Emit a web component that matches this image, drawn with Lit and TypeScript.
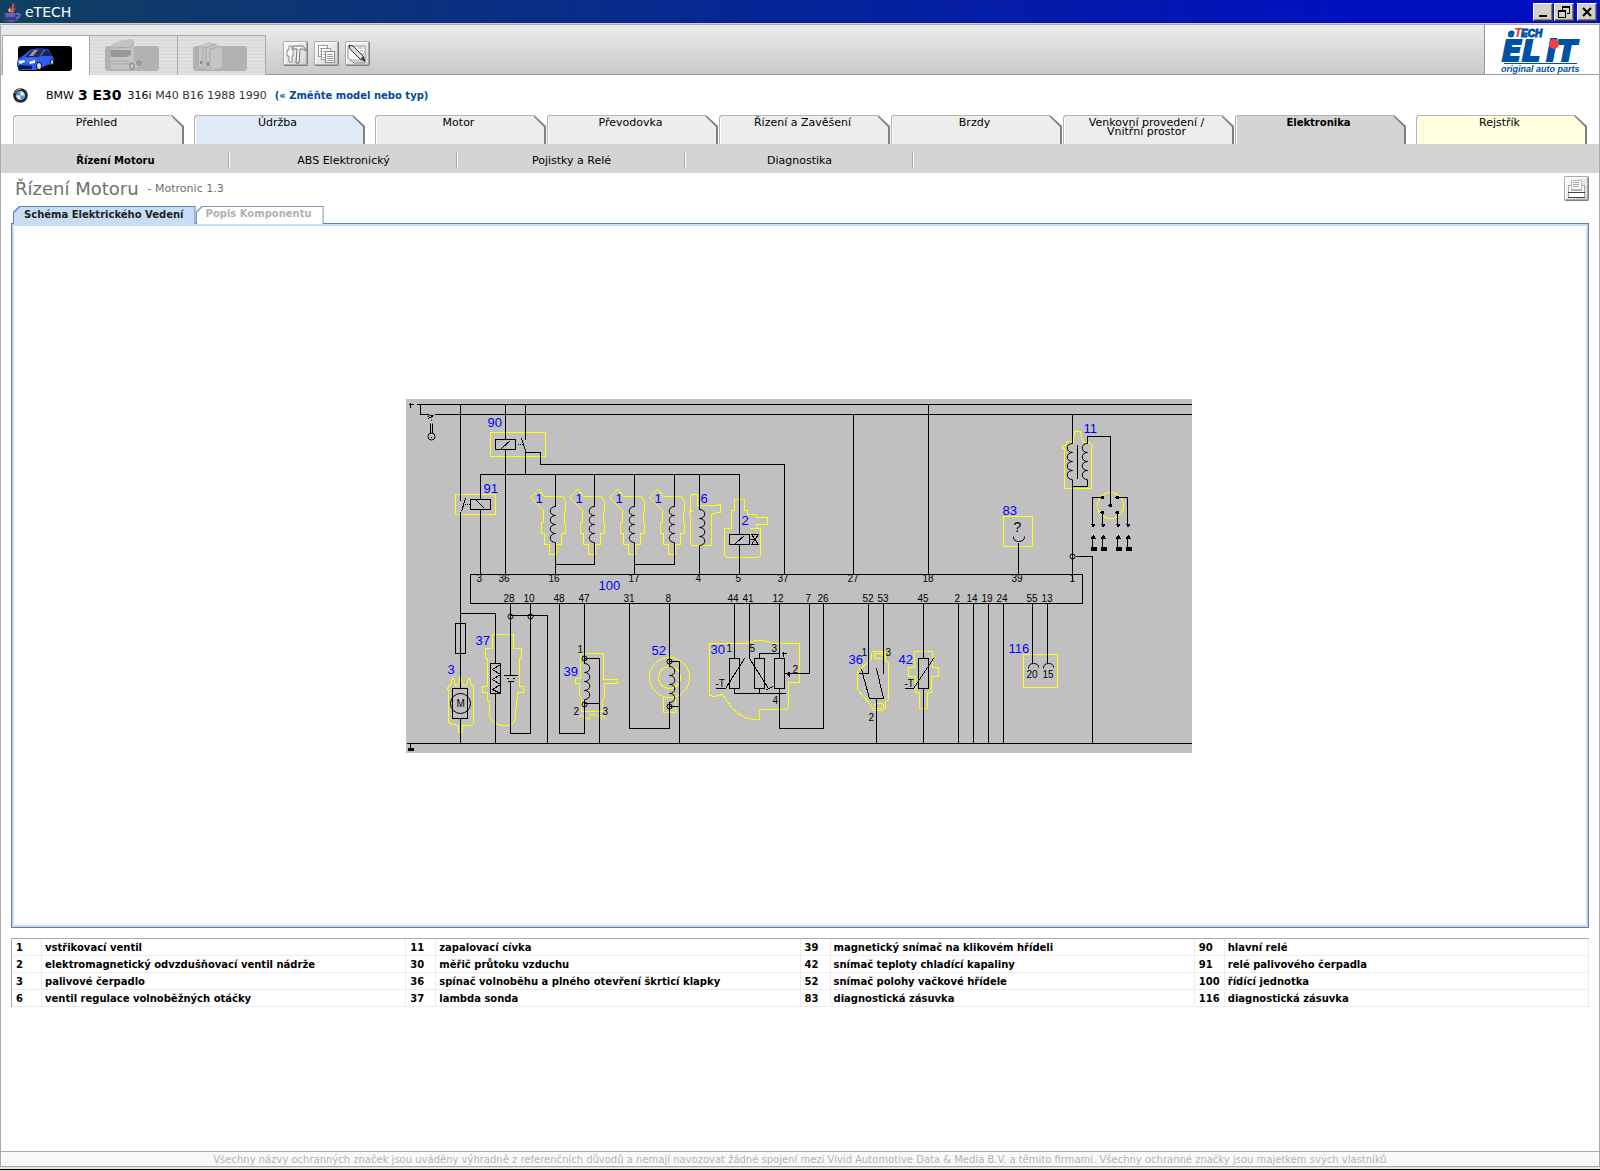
import { LitElement, html, svg, css } from "lit";
import { customElement, state } from "lit/decorators.js";
import { classMap } from "lit/directives/class-map.js";

const JAVA_ICON = svg`<svg width="20" height="20" viewBox="0 0 20 20" aria-hidden="true">
  <path d="M10 11C4 8 12 6 10 1c4 2 2 4 0 6 3-1 4-2 5-2-4 3-2 4-4 6z" fill="#e0543c"/>
  <path d="M7 10C5 8 7 7 8 5c0 2 0 3 1 5z" fill="#f0a090"/>
  <path d="M2 11h12v4c0 2-3 3-6 3s-5-1-6-3z" fill="#3c3c8c"/>
  <path d="M3 12h10M4 14h9" stroke="#8c8cd0" fill="none"/>
  <path d="M14 12c5-1 5 3 0 4" fill="none" stroke="#6a6ab8" stroke-width="2"/>
  <path d="M1 18c4 3 12 3 17-1-4 1-12 2-17 1z" fill="#5858a8"/>
</svg>`;

const CAR_ICON = svg`<svg width="56" height="26" viewBox="0 0 56 26" aria-hidden="true">
  <rect x="2" y="1" width="54" height="25" rx="3" fill="#000"/>
  <path d="M1 17l1-3 6-4 6-5c4-2 15-2 19 0l5 9v5l-7 1-6 3-4 2H5l-4-3z" fill="#2c5cf0"/>
  <path d="M9 12l7-7c3-1 9-1 12-1l-5 8z" fill="#2a2c48"/>
  <path d="M25 11l5-6 3 1 3 5z" fill="#1c2450"/>
  <path d="M13 11l5-6h4l-5 6z" fill="#9098b0"/>
  <path d="M9 13l13 0-4 4-12 1z" fill="#4470ff"/>
  <path d="M2 16l6-1 1 2-5 2zM13 17l6-2v3l-5 1z" fill="#f0f4ff"/>
  <path d="M3 20l13 1v3H5l-3-1z" fill="#10183c"/>
  <ellipse cx="23" cy="21" rx="3" ry="4" fill="#222"/><ellipse cx="23" cy="21" rx="2" ry="3" fill="#d8d8d8"/>
  <ellipse cx="36" cy="17" rx="2" ry="3" fill="#222"/><ellipse cx="36" cy="17" rx="1" ry="2" fill="#d8d8d8"/>
</svg>`;

const TRUCK_ICON = svg`<svg width="54" height="32" viewBox="0 0 54 32" aria-hidden="true">
  <rect x="0" y="7" width="54" height="25" rx="3" fill="#b2b2b2"/>
  <path d="M5 8c2-4 8-7 23-8l1 3v20l8-3v6l-9 4H6z" fill="#c4c4c4"/>
  <path d="M6 9l20-1 2-5" fill="none" stroke="#aaa"/>
  <path d="M5 11h21v5l-5 2H6z" fill="#989898"/>
  <path d="M6 22h18M6 25h18" stroke="#a8a8a8"/>
  <ellipse cx="27" cy="27" rx="3" ry="4" fill="#999"/><ellipse cx="27" cy="27" rx="1" ry="2" fill="#d8d8d8"/>
  <ellipse cx="34" cy="24" rx="3" ry="3" fill="#999"/>
</svg>`;

const BOOKS_ICON = svg`<svg width="54" height="30" viewBox="0 0 54 30" aria-hidden="true">
  <rect x="0" y="5" width="54" height="25" rx="3" fill="#b2b2b2"/>
  <path d="M6 5l9-4 6 1 8 4v20l-9 3-7-1-7-3z" fill="#c6c6c6"/>
  <path d="M6 5l7 2v21M13 7l10-4M17 8v20M17 8l12-3M10 6v20" fill="none" stroke="#a8a8a8"/>
  <path d="M8 20v3M15 21v4" stroke="#8c8c8c" stroke-width="2"/>
</svg>`;

const TOOLS_ICON = svg`<svg width="23" height="23" viewBox="0 0 23 23" aria-hidden="true">
  <path d="M9 4h8c3 0 4 2 5 5l-3-2h-3l-1 14h-3l1-14H9z" fill="#f4f4f4" stroke="#707070"/>
  <path d="M5 4h3v4h1v6H8v6H5v-6H3V8h2z" fill="#fff" stroke="#888"/>
</svg>`;

const PAGES_ICON = svg`<svg width="23" height="23" viewBox="0 0 23 23" shape-rendering="crispEdges" aria-hidden="true">
  <path d="M3.500 3.500h9v11h-9z" fill="#fff" stroke="#999"/>
  <path d="M5 6.500h6M5 9.500h6M5 12.500h6" stroke="#aaa"/>
  <path d="M6.500 6.500h9v11h-9z" fill="#fff" stroke="#999"/>
  <path d="M8 9.500h6M8 12.500h6M8 15.500h6" stroke="#aaa"/>
  <path d="M10.500 9.500h9v11h-9z" fill="#fff" stroke="#888"/>
  <path d="M12 12.500h6M12 14.500h6M12 16.500h6M12 18.500h6" stroke="#999"/>
</svg>`;

const NOTE_ICON = svg`<svg width="23" height="23" viewBox="0 0 23 23" aria-hidden="true">
  <path d="M2 4h17v17H8L2 16z" fill="#fff" stroke="#909090"/>
  <path d="M12 6h5M14 9h3M15 12h3M4 18h12M8 20h11M16 15h2" stroke="#999"/>
  <path d="M3 3l4 1 10 10 2 5-5-2L4 7z" fill="#dcdcdc" stroke="#333"/>
  <path d="M15 16l4 4-2-5z" fill="#222"/>
</svg>`;

const PRINT_ICON = svg`<svg width="23" height="23" viewBox="0 0 23 23" shape-rendering="crispEdges" aria-hidden="true">
  <path d="M3.500 8.500h3v5h10v-5h3v12h-16z" fill="#fff" stroke="#aaa"/>
  <path d="M6.500 3.500h10v9h-10z" fill="#f8f8f8" stroke="#bbb"/>
  <path d="M8 5.500h6M8 7.500h6M8 9.500h6" stroke="#aaa"/>
  <path d="M3 15.500h17M3 20.500h17" stroke="#444"/>
</svg>`;

const BMW_ICON = svg`<svg width="15" height="15" viewBox="0 0 15 15" role="img" aria-label="BMW">
  <circle cx="7.500" cy="7.500" r="7.300" fill="#26292e"/>
  <circle cx="7.500" cy="7.500" r="4.400" fill="#e8ecf0"/>
  <path d="M7.500 7.500V3.100A4.400 4.400 0 0 0 3.100 7.500zM7.500 7.500v4.400a4.400 4.400 0 0 0 4.400-4.400z" fill="#4a9ad4"/>
  <path d="M2 5Q4 1 8 1" stroke="#a0a4a8" fill="none"/>
</svg>`;

const ELIT_LOGO = svg`<svg width="84" height="49" viewBox="0 0 84 49" role="img" aria-label="eTECH ELiT original auto parts">
  <g font-weight="bold" font-style="italic" fill="#0050a4" font-family="Liberation Sans, Arial, sans-serif">
    <text x="8" y="12" font-size="11" stroke="#0050a4">e</text>
    <text x="14" y="12" font-size="13" fill="#e8383c">T</text>
    <text x="21" y="12" font-size="10" stroke="#0050a4">ECH</text>
    <g font-size="29" stroke="#0050a4" stroke-width="2" font-family="DejaVu Sans, Verdana, sans-serif">
      <text x="2" y="36">E</text>
      <text x="22" y="36">L</text>
      <text x="46" y="36">i</text>
      <text x="57" y="36">T</text>
    </g>
    <circle cx="54" cy="19" r="5" fill="#f04040"/>
    <path d="M4 38h73v1H4z"/>
    <text x="1" y="47" font-size="9">original auto parts</text>
  </g>
</svg>`;

type Point = [number, number];

/* Wires: polylines in diagram units. */
const WIRES = `
M408 404h5M410 402v5
M416 404H1191M420 404V414H428M434 414H1191M428 418l5-3
M460 404V500M465 498L461 511M460 511V688M460 718V743
M505 404V439M505 449V574M495 439h20v10h-20zM501 448l9-8
M525 404V439M521 438L525 450V474M525 452H540V464H784V574
M480 499V474H739V534M480 509V574M470 499h20v10h-20zM476 500l8 8
M555 474V506M555 542V574M594 474V506M594 542V564H555
M634 474V506M634 542V574M674 474V506M674 542V564H634
M699 474V509M699 545V574
M739 544V574M729 534h20v10h-20zM735 543l9-8M751 534h7l-7 10h7zM749 539h5
M853 414V574M928 404V574
M1018 542V574
M1072 414V443M1072 479V581M1077 444V478M1087 479V486H1072M1087 443V436H1110V505
M1102 497H1092V526M1117 497H1127V526M1102 512V526M1117 512V526
M1092 537V547M1102 537V547M1117 537V547M1127 537V547
M1075 556H1092V743
M470 574H1082V603H470z
M406 743H1191M410 743V748
M460 613H495V663M495 693V743M455 623h10v30h-10zM490 663h10v30h-10z
M500 664l-8 5 8 5-8 5 8 5-8 5 8 4
M452 688h15v30h-15z
M510 603V675M503 675h14M507 681h6M506 678h2M512 678h2M510 681V733H530V603M510 615H547V743
M559 603V733H584V699M584 603V663M584 658H599V743M584 703H599
M629 603V728H669V701M669 603V666M669 661H679V743M669 706H679
M734 603V658M729 658h10v30h-10zM734 688V693H785M759 688V693M754 658h10v30h-10zM759 658V653H779
M749 603V658L768 688M766 689l7-3
M779 603V658M774 658h10v30h-10zM779 688V728H823V603M809 603V673H784M781 653h5M783 651v5
M715 688h10l19-30
M868 603V673H858M883 603V673M861 669l8 29h14l-7-30M876 698V743
M923 603V658M918 658h10v30h-10zM923 688V743M904 688h9l20-30
M958 603V743M973 603V743M988 603V743M1003 603V743
M1032 603V663M1047 603V663
`;

/* Curved strokes: sockets, connection loops, key switch. */
const CURVES = `
M1013 536q0 5 5 5q6 0 6-5
M1028 668q0-5 5-5q5 0 5 4
M1043 668q0-5 5-5q5 0 5 4
M427 416q3-2 6-1
M430 423v10M432 423v10M431 416v1M431 419v1
`;

const OUTLINES = `
M490 432h55v24h-55zM455 494h40v20h-40z
M690 495l2-1h5v11h21v-1h2v8l-8 1-1 2v30h-20l-1-1v-29l-1-4h3l-2-1z
M734 499h10v11h3v4h9v3h11v7h-11v4h-7h11v27l-3 2h-31l-2-2v-27h7v-18h3z
M1003 516h29v30h-29z
M1062 446l4-2v-3h4l3 2 1-12h6l2 10 4 2 1-2 3 2 2 2v3h-1v40h-27v-40h-2z
M447 689l1-4h2l2-7h1l2 7h2l2-5 1-8 1 8 2 5h3l2-7h1l2 7h2v38l-3 2h-8v7h-4v-7l-6-1-4-2v-33z
M492 634h21v14h8v10h-2v28h4v6h-6v8h-1l-1 18-2 4-5 3h-5l-6-1-6-4-2-5v-15h-2v-8h-5v-6h5v-28h-2v-10h7z
M580 653h23v26h14v4h-13v14l-2 2v12h-21v-14l-2-2v-12h-4v-5h5z
M578 718l2-3 3 1 2 2h4l1-4h5l2 2 3 1 3-2 2 3
M663 696v16h12v-16
M709 643h37l4-2 7-1h6l7 2 3 1h26v39h-11v24l-2 3h-27v10h-7l-10-3-10-8-7-10-3-4-8 2-5-1z
M871 653l2-2h11l1 2v8l3 1v37l-3 2v7l-2 2h-10l-2-3-1-3-13-15v-18l11-10 3-2z
M875 653h7l1 2v2l-1 1h-7l-1-1v-2zM875 703h7l1 2v2l-1 1h-7l-1-1v-2z
M914 651h18v16h6v9h-7v16h-4v16h-8v-16h-4v-16h-7v-9h6z
M1023 654h34v33h-34z
`;

const INJECTOR = "530,497 538,489 544,496 562,496 565,501 565,511 564,511 564,522 565,522 565,533 561,533 561,544 556,544 556,554 549,554 549,544 544,544 544,533 541,533 541,522 543,522 543,510";
const INJECTOR_SHIFTS = [0, 39, 79, 119];

/* Coils: x, y and bulge direction (-1 left, 1 right). */
const COILS: [number, number, number][] = [
  [555, 506, -1], [594, 506, -1], [634, 506, -1], [674, 506, -1], [699, 509, 1],
  [1072, 443, -1], [1087, 443, -1], [584, 663, 1], [669, 666, 1],
];

const LOOPS: Point[] = [[1072, 556], [510, 616], [530, 616], [584, 658], [584, 704], [669, 661], [669, 706]];
const CONTACTS: Point[] = [[1102, 497], [1117, 497], [1102, 512], [1117, 512], [1110, 505]];
const LEADS = [1092, 1102, 1117, 1127];

const COMPONENT_LABELS: [string, number, number][] = [
  ["90", 487, 426], ["91", 483, 492], ["1", 535, 502], ["1", 575, 502], ["1", 615, 502], ["1", 654, 502],
  ["6", 700, 502], ["2", 741, 524], ["11", 1083, 432], ["83", 1002, 514], ["100", 598, 589],
  ["37", 475, 644], ["3", 447, 673], ["39", 563, 675], ["52", 651, 654], ["30", 710, 653],
  ["36", 848, 663], ["42", 898, 663], ["116", 1008, 652],
];

const PIN_LABELS: [string, number, number][] = [
  ["3", 476, 581], ["36", 498, 581], ["16", 548, 581], ["17", 628, 581], ["4", 695, 581], ["5", 735, 581],
  ["37", 777, 581], ["27", 847, 581], ["18", 922, 581], ["39", 1011, 581], ["1", 1069, 581],
  ["28", 503, 601], ["10", 523, 601], ["48", 553, 601], ["47", 578, 601], ["31", 623, 601], ["8", 665, 601],
  ["44", 727, 601], ["41", 742, 601], ["12", 772, 601], ["7", 805, 601], ["26", 817, 601], ["52", 862, 601],
  ["53", 877, 601], ["45", 917, 601], ["2", 954, 601], ["14", 966, 601], ["19", 981, 601], ["24", 996, 601],
  ["55", 1026, 601], ["13", 1041, 601],
  ["1", 577, 652], ["2", 573, 714], ["3", 602, 714], ["1", 726, 651], ["5", 749, 651], ["3", 771, 651],
  ["2", 792, 672], ["4", 772, 703], ["-T", 715, 686], ["1", 861, 655], ["3", 885, 655], ["2", 868, 720],
  ["-T", 904, 686], ["20", 1026, 677], ["15", 1042, 677], ["M", 456, 706],
];

@customElement("wiring-diagram")
class WiringDiagram extends LitElement {
  static styles = css`
    :host { display: block; }
    .diagram { display: block; max-width: 100%; background: #c0c0c0; }
    .line { fill: none; stroke: #000; shape-rendering: crispEdges; }
    .curve { fill: none; stroke: #000; }
    .outline { fill: none; stroke: #ff0; shape-rendering: crispEdges; }
    .solid { fill: #000; shape-rendering: crispEdges; }
    .label { font-family: "Liberation Sans", Arial, sans-serif; font-size: 13px; fill: #00f; }
    .pin { font-family: "Liberation Sans", Arial, sans-serif; font-size: 10px; fill: #000; }
    .query { font-size: 14px; }
  `;

  render() {
    return html`<svg class="diagram" width="786" height="354" viewBox="405.5 398.5 786 354"
      role="img" aria-label="Schéma Elektrického Vedení">
      <path class="outline" d=${OUTLINES}></path>
      ${INJECTOR_SHIFTS.map((dx) => svg`<polygon class="outline" points=${INJECTOR} transform="translate(${dx} 0)"/>`)}
      <circle class="outline" cx="1110" cy="505" r="13"></circle>
      <circle class="outline" cx="669" cy="677" r="20"></circle>
      <circle class="outline" cx="669" cy="677" r="11"></circle>
      <path class="line" d=${WIRES}></path>
      <path class="line" d="M517 444h6M464 504h6" stroke-dasharray="1 1"></path>
      <path class="curve" d=${CURVES}></path>
      ${COILS.map(([x, y, s]) => {
        const turn = `c${7 * s} 0 ${7 * s} 9 0 9`;
        return svg`<path class="curve" d="M${x} ${y}${turn}${turn}${turn}${turn}"/>`;
      })}
      ${LOOPS.map(([x, y]) => svg`<circle class="curve" cx=${x} cy=${y} r="2.5"/>`)}
      <circle class="curve" cx="431" cy="436" r="3.5"></circle>
      <circle class="solid" cx="431" cy="437" r="1"></circle>
      <circle class="curve" cx="460" cy="703" r="10"></circle>
      ${CONTACTS.map(([x, y]) => svg`<circle class="solid" cx=${x} cy=${y} r="2"/>`)}
      ${LEADS.map((x) => svg`<path class="solid" d="M${x - 2} 523h5l-2 4zM${x - 2} 538h5l-2-4zM${x - 2} 546h6v4h-6z"/>`)}
      <path class="solid" d="M785 673l4-2v5zM407.500 747.500h6v3h-6z"></path>
      ${PIN_LABELS.map(([t, x, y]) => svg`<text class="pin" x=${x} y=${y}>${t}</text>`)}
      <text class="pin query" x="1013" y="531">?</text>
      <text class="pin" x="780" y="696">−</text>
      ${COMPONENT_LABELS.map(([t, x, y]) => svg`<text class="label" x=${x} y=${y}>${t}</text>`)}
    </svg>`;
  }
}

const SECTIONS = [
  { name: "Přehled", tone: "plain", end: true },
  { name: "Údržba", tone: "blue", end: true },
  { name: "Motor", tone: "plain", end: false },
  { name: "Převodovka", tone: "plain", end: false },
  { name: "Řízení a Zavěšení", tone: "plain", end: false },
  { name: "Brzdy", tone: "plain", end: false },
  { name: "Venkovní provedení / Vnitřní prostor", tone: "plain", end: false },
  { name: "Elektronika", tone: "plain", end: true },
  { name: "Rejstřík", tone: "yellow", end: false },
];

const SUBSECTIONS = ["Řízení Motoru", "ABS Elektronický", "Pojistky a Relé", "Diagnostika"];

const LEGEND = [
  ["1", "vstřikovací ventil", "11", "zapalovací cívka", "39", "magnetický snímač na klikovém hřídeli", "90", "hlavní relé"],
  ["2", "elektromagnetický odvzdušňovací ventil nádrže", "30", "měřič průtoku vzduchu", "42", "snímač teploty chladící kapaliny", "91", "relé palivového čerpadla"],
  ["3", "palivové čerpadlo", "36", "spínač volnoběhu a plného otevření škrticí klapky", "52", "snímač polohy vačkové hřídele", "100", "řídící jednotka"],
  ["6", "ventil regulace volnoběžných otáčky", "37", "lambda sonda", "83", "diagnostická zásuvka", "116", "diagnostická zásuvka"],
];

@customElement("app-root")
class AppRoot extends LitElement {
  @state() private vehicle = 0;
  @state() private section = "Elektronika";
  @state() private subsection = "Řízení Motoru";

  static styles = css`
    :host {
      display: flex; flex-direction: column; min-height: 100vh; background: #fff; color: #000;
      font-family: "DejaVu Sans", Verdana, sans-serif; font-size: 11px;
    }
    * { box-sizing: border-box; }
    button { font: inherit; color: inherit; border: 0; padding: 0; margin: 0; background: none; cursor: pointer; }
    svg { display: block; flex: none; overflow: visible; }

    .titlebar {
      display: flex; align-items: center; height: 24px; padding: 0 3px 0 2px; gap: 3px;
      color: #fff; background: linear-gradient(90deg, #104060, #0010c0 85%); border-bottom: 1px solid #d4d0c8;
    }
    .title { flex: 1; margin: 0; font-size: 14px; font-weight: normal; }
    .controls { display: flex; gap: 1px; }
    .control {
      display: grid; place-items: center; width: 20px; height: 18px; background: #d4d0c8;
      border: 1px solid; border-color: #fff #404040 #404040 #fff; box-shadow: inset -1px -1px #808080;
    }
    .close { margin-left: 2px; }

    .frame { flex: 1; display: flex; flex-direction: column; border: 1px solid #aaa; border-bottom: 0; }
    .header {
      display: flex; align-items: flex-end; height: 50px; padding-left: 1px;
      background: linear-gradient(#ececec, #c8c8c8); box-shadow: inset 0 -1px #999;
    }
    .vehicles { display: flex; border-right: 1px solid #aaa; }
    .vehicle {
      display: flex; align-items: flex-end; width: 88px; height: 40px; padding: 0 0 4px 15px;
      border: 1px solid #aaa; border-width: 1px 0 0 1px;
      background: repeating-linear-gradient(#dcdcdc 0 2px, #e4e4e4 2px 3px, #dadada 3px 5px, #e0e0e0 5px 7px);
    }
    .vehicle.active { width: 87px; padding-left: 13px; background: #fff; }
    .tools { flex: 1; display: flex; gap: 6px; align-self: flex-start; padding: 16px 0 0 17px; }
    .tool {
      display: grid; place-items: center; width: 25px; height: 25px; border-radius: 2px;
      border: 1px solid; border-color: #aaa #808080 #808080 #aaa; background: linear-gradient(135deg, #fff, #d0d0d0);
      box-shadow: inset -1px -1px #aaa, inset 1px 1px #fff;
    }
    .brand { display: flex; align-items: center; justify-content: center; width: 115px; height: 50px;
      background: #fff; border: 1px solid #999; border-width: 0 0 1px 1px; }

    .model { display: flex; align-items: center; height: 40px; padding: 0 12px; gap: 4px; }
    .make { margin-left: 14px; }
    .series { font-size: 14px; }
    .engine { color: #333; margin-left: 2px; }
    .type { color: #000; }
    .change { color: #0048a0; font-size: 10px; font-weight: bold; text-decoration: none; margin-left: 4px; }

    .sections { display: flex; gap: 1px; padding: 0 12px; }
    .section {
      flex: 1; height: 29px; padding: 1px 2px 0 1px;
      background: linear-gradient(90deg, #b4b4b4 calc(100% - 12px), #808080 calc(100% - 12px));
      clip-path: polygon(0 2px, 2px 0, calc(100% - 12px) 0, 100% 11px, 100% 100%, 0 100%);
    }
    .section.end { margin-right: 9px; }
    .face {
      display: block; height: 100%; padding: 2px 22px 0 18px; line-height: 9px;
      background: #ededed; border-left: 1px solid #fff;
      clip-path: polygon(0 2px, 2px 0, calc(100% - 11px) 0, 100% 11px, 100% 100%, 0 100%);
    }
    .blue .face { background: #e0eaf6; }
    .yellow .face { background: #ffffe0; }
    .active .face { background: #d4d4d4; font-size: 10px; font-weight: bold; }

    .subsections { display: flex; align-items: center; height: 29px; padding: 3px 0 0 1px; background: #d4d4d4; }
    .subsection { width: 228px; height: 15px; border-right: 1px solid #fff; box-shadow: inset -1px 0 #aaa; }
    .subsection.current { font-size: 10px; font-weight: bold; }

    .heading { display: flex; align-items: center; height: 31px; padding: 0 10px 0 14px; gap: 9px; color: #707070; }
    .name { margin: 0; font-size: 18px; font-weight: normal; }
    .detail { flex: 1; }

    .views { display: flex; padding: 2px 0 0 12px; margin-bottom: -1px; }
    .view {
      height: 18px; padding: 1px; background: #5c84c0; font-size: 10px; font-weight: bold; color: #222;
      clip-path: polygon(0 6px, 6px 0, 100% 0, 100% 100%, 0 100%);
    }
    .tag {
      display: block; height: 17px; padding: 0 11px 0 10px; line-height: 16px; background: #c8dcf4;
      clip-path: polygon(0 6px, 6px 0, 100% 0, 100% 100%, 0 100%);
    }
    .view:disabled { color: #b0b0b0; background: #8098b0; }
    .view:disabled .tag { background: #fff; line-height: 14px; padding-left: 9px; }

    .panel {
      flex: 1; display: grid; place-items: center; margin: 0 10px; padding-right: 2px; min-height: 400px;
      border: 1px solid #5c7cb0; box-shadow: inset 0 0 0 2px #c8dcf4;
    }

    .legend {
      width: calc(100% - 20px); margin: 10px 10px 144px; border-collapse: separate; border-spacing: 0;
      table-layout: fixed; border: 1px solid #aaa; border-width: 1px 0 0 1px; font-size: 10px; font-weight: bold;
    }
    .legend th, .legend td {
      height: 17px; padding: 1px 4px 0; text-align: left; line-height: 15px; font-weight: bold;
      border: 1px solid #ececec; border-width: 0 1px 1px 0; white-space: nowrap;
    }
    .legend .number { width: 30px; }
    .legend td { padding-left: 3px; }

    .footer {
      height: 16px; line-height: 15px; text-align: center; font-size: 10px; color: #b4b4b4; background: #f8f8f8;
      border: 1px solid #aaa; border-width: 1px 0; white-space: nowrap; overflow: hidden;
    }
    .edge { height: 4px; background: #d4d0c8; border-top: 2px solid #e4e2dc; box-shadow: inset 0 1px #000; }
  `;

  render() {
    return html`
      <div class="titlebar">
        ${JAVA_ICON}
        <h1 class="title">eTECH</h1>
        <div class="controls">
          <button class="control" aria-label="Minimalizovat"><svg width="14" height="12" viewBox="0 0 14 12"><path d="M3 9h8v2H3z"/></svg></button>
          <button class="control" aria-label="Obnovit"><svg width="14" height="12" viewBox="0 0 14 12" shape-rendering="crispEdges"><path d="M5 0h8v8h-3V7h2V2H6v2H5zM1 4h8v8H1zM2 6v5h6V6z" fill-rule="evenodd"/></svg></button>
          <button class="control close" aria-label="Zavřít"><svg width="14" height="12" viewBox="0 0 14 12"><path d="M3 2l8 8M11 2l-8 8" stroke="#000" stroke-width="2"/></svg></button>
        </div>
      </div>
      <div class="frame">
        <header class="header">
          <div class="vehicles">
            ${[CAR_ICON, TRUCK_ICON, BOOKS_ICON].map((icon, i) => html`
              <button class=${classMap({ vehicle: true, active: this.vehicle === i })}
                aria-label=${["Osobní vozy", "Nákladní vozy", "Katalog"][i]} @click=${() => (this.vehicle = i)}>${icon}</button>`)}
          </div>
          <div class="tools">
            <button class="tool" aria-label="Nástroje">${TOOLS_ICON}</button>
            <button class="tool" aria-label="Dokumenty">${PAGES_ICON}</button>
            <button class="tool" aria-label="Poznámky">${NOTE_ICON}</button>
          </div>
          <div class="brand">${ELIT_LOGO}</div>
        </header>
        <div class="model">
          ${BMW_ICON}
          <span class="make">BMW</span>
          <strong class="series">3 E30</strong>
          <span class="engine"><span class="type">316i</span> M40 B16 1988 1990</span>
          <a class="change" href="#model">(« Změňte model nebo typ)</a>
        </div>
        <nav class="sections">
          ${SECTIONS.map((s) => html`
            <button class=${classMap({ section: true, [s.tone]: true, end: s.end, active: this.section === s.name })}
              @click=${() => (this.section = s.name)}><span class="face">${s.name}</span></button>`)}
        </nav>
        <nav class="subsections">
          ${SUBSECTIONS.map((s) => html`
            <button class=${classMap({ subsection: true, current: this.subsection === s })}
              @click=${() => (this.subsection = s)}>${s}</button>`)}
        </nav>
        <div class="heading">
          <h2 class="name">Řízení Motoru</h2>
          <span class="detail">- Motronic 1.3</span>
          <button class="tool" aria-label="Tisk">${PRINT_ICON}</button>
        </div>
        <div class="views">
          <button class="view"><span class="tag">Schéma Elektrického Vedení</span></button>
          <button class="view" disabled><span class="tag">Popis Komponentu</span></button>
        </div>
        <main class="panel"><wiring-diagram></wiring-diagram></main>
        <table class="legend">
          <colgroup>${[0, 1, 2, 3].map(() => html`<col class="number"><col>`)}</colgroup>
          <tbody>
            ${LEGEND.map((row) => html`<tr>${row.map((cell, i) => i % 2 ? html`<td>${cell}</td>` : html`<th scope="row">${cell}</th>`)}</tr>`)}
          </tbody>
        </table>
        <footer class="footer">Všechny názvy ochranných značek jsou uváděny výhradně z referenčních důvodů a nemají navozovat žádné spojení mezi Vivid Automotive Data &amp; Media B.V. a těmito firmami. Všechny ochranné značky jsou majetkem svých vlastníků</footer>
      </div>
      <div class="edge"></div>
    `;
  }
}
